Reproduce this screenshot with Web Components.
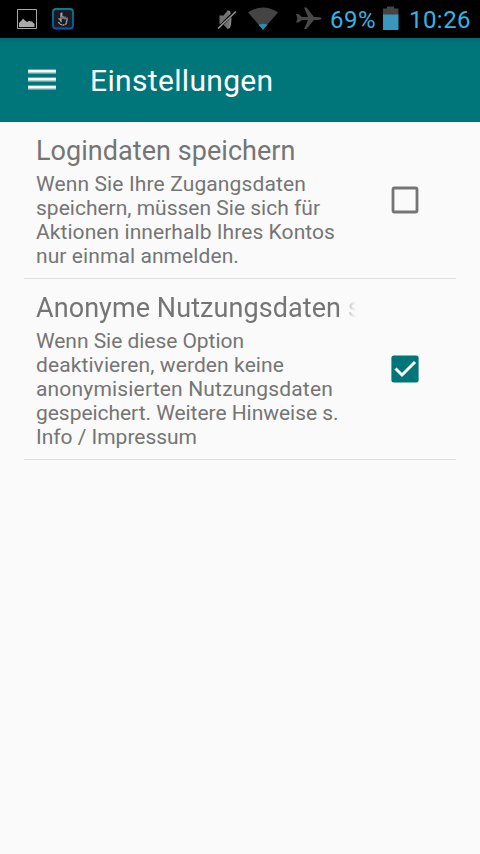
<!DOCTYPE html>
<html lang="de"><head><meta charset="utf-8"><title>Einstellungen</title>
<style>html,body{margin:0;height:100%;background:#fafafa;font-family:Roboto,"Liberation Sans",sans-serif;overflow:hidden}</style></head>
<body><settings-screen></settings-screen>
<script>
const define = (name, html, init) => customElements.define(name, class extends HTMLElement {
  constructor() {
    super();
    const t = document.createElement('template');
    t.innerHTML = html;
    this.attachShadow({mode: 'open'}).append(t.content.cloneNode(true));
  }
  connectedCallback() { if (init) init(this); }
});

// One line of text, its letter spacing adjusted so that it spans the given width.
define('text-line', `<style>:host{display:block;white-space:nowrap}span{display:inline-block}</style><span><slot></slot></span>`, el => {
  const s = el.shadowRoot.querySelector('span'), w = +el.getAttribute('w');
  if (w) s.style.letterSpacing = (w - s.getBoundingClientRect().width) / el.textContent.length + 'px';
});

define('status-bar', `<style>
:host{display:flex;height:38px;background:#000;color:#33b5e5;font-size:24px;line-height:40px;box-sizing:border-box;align-items:flex-start}
svg{display:block;flex:none}text-line{flex:none}
.b{width:46px;margin-left:1px}.t{width:61px;margin-left:10px}
</style>
<svg width="329" height="38" viewBox="0 0 329 38">
<defs><linearGradient id="g" x2="0" y2="1"><stop stop-color="#087c94"/><stop offset="1" stop-color="#0759a8"/></linearGradient></defs>
<path d="M17.500 9.500h19v19h-19z" fill="#000" stroke="#aaa"/>
<path d="M19 27v-4l3-3 1-1.500 2 2 2 1.500 2-1 3 .5 2.500 2.500v3z" fill="#aaa"/>
<rect x="53" y="9" width="20" height="19.500" rx="3" fill="#1b1b25" stroke="url(#g)" stroke-width="1.800"/>
<path d="M61 13v7l-2.500-1.500M61.800 12.500v4M63 16v3M65 16.500v3M67 17.500v3l-1 2M60 20l1.500 2" fill="none" stroke="#aaa" stroke-width="1.200"/>
<path d="M58.500 22q1.500 3 4.500 3t4-3" fill="none" stroke="#aaa" stroke-width="1.300" stroke-dasharray="2 .6"/>
<path d="M219.500 15.500h4L228 10q2 1 2 5v9q0 4-2 5.500l-4.500-5h-4z" fill="#707070"/>
<path d="M229 11q3 8 0 17" fill="none" stroke="#858585" stroke-width="2"/>
<path d="M217 29.500l18-18" stroke="#000" stroke-width="3"/><path d="M218 28.500l18-17" stroke="#929292" stroke-width="1.700"/>
<path d="M248 12.500q15-10 30 0l-15 17z" fill="#444"/>
<path d="M258.500 24.800q4.500-2 9 0L263 30z" fill="#258fb5"/>
<path d="M296 14h2.500l3.500 3h6l-4-9.500h2.500L314 17h4q3.500.2 3.500 1.500T318 20h-4l-7.500 9H304l4-9h-6l-3.500 2.500H296l1.500-4z" fill="#484848"/>
</svg>
<text-line class="b" w="46">69%</text-line>
<svg width="23" height="38" viewBox="0 0 23 38"><path d="M7 8.500h4v-2h7v2h4.500V15H7z" fill="#444"/><path d="M7 14.500h15.500V30H7z" fill="#3997bd"/></svg>
<text-line class="t" w="62">10:26</text-line>`);

define('app-bar', `<style>
:host{display:flex;align-items:center;height:84px;padding-left:28px;gap:34px;box-sizing:border-box;color:#fff;font-size:30px;line-height:40px;background:linear-gradient(#00686e,#00757a 5px,#00757a)}
svg{display:block}text-line{padding-top:2px}
</style>
<svg width="28" height="22" viewBox="0 0 28 22"><path d="M0 0h28v5H0zM0 8h28v5H0zM0 16h28v5H0z" fill="#5fa8ab"/><path d="M0 1h28v2.500H0zM0 9h28v2.500H0zM0 17h28v2.500H0z" fill="#fff"/></svg>
<text-line><slot></slot></text-line>`, el => {
  // The slotted title is fitted here, as its text belongs to the host.
  const s = el.shadowRoot.querySelector('text-line').shadowRoot.querySelector('span');
  s.style.letterSpacing = (183.5 - s.getBoundingClientRect().width) / el.textContent.length + 'px';
});

define('check-box', `<style>:host{display:block;width:28px;height:28px;margin-bottom:3px}svg{display:block}.on{display:none}:host([checked]) .on{display:block}:host([checked]) .off{display:none}</style>
<svg width="28" height="28" viewBox="0 0 28 28">
<rect class="off" x="2" y="2" width="24" height="24" rx="1.500" fill="none" stroke="#757575" stroke-width="2.800"/>
<g class="on"><rect x=".4" y=".4" width="27.200" height="27.200" rx="2.500" fill="#00757a"/><path d="M4.500 13.500l6.500 6.500L24 7" fill="none" stroke="#fff" stroke-width="3"/></g></svg>`);

define('setting-row', `<style>
:host{display:grid;grid-template-columns:320px 28px;column-gap:35px;align-items:center;margin:0 24px;padding:13px 0 10px 12px;border-bottom:1px solid #dedede;color:#757575;font-size:21px;line-height:24px}
.title{font-size:27px;line-height:32px;margin-bottom:5px;width:320px;overflow:hidden}
.fade{-webkit-mask-image:linear-gradient(90deg,#000 303px,#0007 311px,transparent 320px);mask-image:linear-gradient(90deg,#000 303px,#0007 311px,transparent 320px)}
</style><div><div class="title"><slot name="title"></slot></div><slot></slot></div><slot name="control"></slot>`, el => {
  if (el.hasAttribute('fade')) el.shadowRoot.querySelector('.title').classList.add('fade');
});

define('settings-screen', `<style>:host{display:block;width:480px;height:854px;background:#fafafa}.wide{letter-spacing:.07px}</style>
<status-bar></status-bar>
<app-bar>Einstellungen</app-bar>
<setting-row>
<text-line slot="title" w="259.500">Logindaten speichern</text-line>
<text-line w="270">Wenn Sie Ihre Zugangsdaten</text-line>
<text-line w="284">speichern, müssen Sie sich für</text-line>
<text-line w="299">Aktionen innerhalb Ihres Kontos</text-line>
<text-line w="203">nur einmal anmelden.</text-line>
<check-box slot="control"></check-box>
</setting-row>
<setting-row fade>
<text-line slot="title" class="wide">Anonyme Nutzungsdaten speichern</text-line>
<text-line w="208">Wenn Sie diese Option</text-line>
<text-line w="248">deaktivieren, werden keine</text-line>
<text-line w="297">anonymisierten Nutzungsdaten</text-line>
<text-line w="302.500">gespeichert. Weitere Hinweise s.</text-line>
<text-line w="161">Info / Impressum</text-line>
<check-box slot="control" checked></check-box>
</setting-row>`);
</script></body></html>
